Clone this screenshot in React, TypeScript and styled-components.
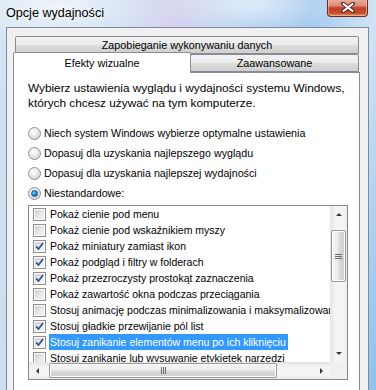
import React from 'react';
import styled, { createGlobalStyle } from 'styled-components';

const GlobalStyle = createGlobalStyle`
  html, body {
    margin: 0;
    padding: 0;
  }
  body {
    width: 376px;
    height: 390px;
    overflow: hidden;
    font-family: "Liberation Sans", Arial, sans-serif;
    font-size: 11px;
    color: #000;
  }
`;

const Frame = styled.div`
  width: 376px;
  height: 390px;
  display: flex;
  flex-direction: column;
  overflow: hidden;
  background:
    radial-gradient(ellipse 120px 40px at 60px 8px, rgba(255, 255, 255, 0.7), rgba(255, 255, 255, 0) 100%),
    radial-gradient(ellipse 90px 30px at 250px 4px, rgba(255, 255, 255, 0.6), rgba(255, 255, 255, 0) 100%),
    linear-gradient(100deg, #d3e3f2 0%, #c6daf0 25%, #d7d2f0 40%, #b2d1ef 55%, #a4c9ee 70%, #cfe3f5 85%, #8cc0ec 100%);
`;

const TitleBar = styled.div`
  height: 27px;
  display: flex;
  align-items: flex-start;
  padding-left: 6px;
`;

const Title = styled.div`
  margin-top: 6px;
  line-height: 15px;
  font-size: 12.6px;
  color: #000;
  text-shadow: 0 0 6px rgba(255, 255, 255, 0.9);
`;

const CloseButton = styled.div`
  margin-left: auto;
  margin-right: 8px;
  margin-top: -1px;
  width: 41px;
  height: 18px;
  box-sizing: border-box;
  border: 1px solid #6d2a22;
  border-top: none;
  border-radius: 0 0 4px 4px;
  display: flex;
  align-items: center;
  justify-content: center;
  background: linear-gradient(180deg, #eab3a3 0%, #dc8a76 40%, #c1402c 52%, #c44a2f 80%, #e2894e 100%);
  box-shadow: inset 0 0 0 1px rgba(255, 220, 200, 0.5);
`;

const Client = styled.div`
  flex: 1;
  margin: 0 7px 0 6px;
  border: 1px solid #7e8a98;
  border-bottom: none;
  background: #f0f0f0;
  padding: 8px 0 0 6px;
  display: flex;
  flex-direction: column;
`;

const TabControl = styled.div`
  width: 347px;
  flex: 1;
  display: flex;
  flex-direction: column;
`;

const TabRow = styled.div<{ $front?: boolean }>`
  display: flex;
  align-items: flex-end;
  height: ${p => (p.$front ? '20px' : '18px')};
  margin-top: ${p => (p.$front ? '-2px' : '0')};
  padding-left: ${p => (p.$front ? '0' : '2px')};
  position: relative;
  z-index: ${p => (p.$front ? 1 : 0)};
`;

const Tab = styled.div<{ $width: number; $active?: boolean }>`
  box-sizing: border-box;
  width: ${p => p.$width}px;
  height: ${p => (p.$active ? '21px' : '18px')};
  margin-bottom: ${p => (p.$active ? '-1px' : '0')};
  margin-left: ${p => (p.$active ? '0' : '-1px')};
  border: 1px solid #898c95;
  border-bottom: ${p => (p.$active ? 'none' : '1px solid #898c95')};
  border-radius: 2px 2px 0 0;
  display: flex;
  align-items: center;
  justify-content: center;
  padding-bottom: ${p => (p.$active ? '1px' : '0')};
  font-size: 10.8px;
  background: ${p =>
    p.$active
      ? '#ffffff'
      : 'linear-gradient(180deg, #f2f2f2 0%, #ebebeb 50%, #dddddd 51%, #cfcfcf 100%)'};
  position: relative;
  z-index: ${p => (p.$active ? 2 : 1)};
  &:first-child {
    margin-left: 0;
  }
`;

const Page = styled.div`
  flex: 1;
  background: #fff;
  border: 1px solid #898c95;
  border-bottom: none;
  padding: 8px 0 0 14px;
  display: flex;
  flex-direction: column;
`;

const Description = styled.p`
  margin: 0;
  line-height: 15px;
  font-size: 11.8px;
`;

const RadioGroup = styled.div`
  margin-top: 12px;
  display: flex;
  flex-direction: column;
`;

const RadioRow = styled.label`
  height: 20px;
  display: flex;
  align-items: center;
  gap: 3px;
  font-size: 10.7px;
`;

const RadioDot = styled.span<{ $on?: boolean }>`
  width: 13px;
  height: 13px;
  box-sizing: border-box;
  border-radius: 50%;
  border: 1px solid #8e8f8f;
  background: radial-gradient(circle at 40% 35%, #ffffff 0%, #e8e8e8 45%, #c9c9c9 100%);
  display: flex;
  align-items: center;
  justify-content: center;
  &::after {
    content: '';
    display: ${p => (p.$on ? 'block' : 'none')};
    width: 5px;
    height: 5px;
    border-radius: 50%;
    background: radial-gradient(circle at 40% 35%, #8fdcff 0%, #1a8ad8 50%, #0b3f8a 100%);
    border: 1px solid #1e4e90;
  }
`;

const ListBox = styled.div`
  margin-top: 2px;
  width: 320px;
  height: 175px;
  box-sizing: border-box;
  border: 1px solid #828790;
  display: grid;
  grid-template-columns: 1fr 17px;
  grid-template-rows: 1fr 17px;
  background: #fff;
`;

const ListContent = styled.div`
  overflow: hidden;
  display: flex;
  flex-direction: column;
`;

const ItemRow = styled.div`
  height: 16px;
  flex: none;
  display: flex;
  align-items: center;
  padding-left: 4px;
  white-space: nowrap;
  font-size: 10.5px;
`;

const Check = styled.span`
  flex: none;
  width: 13px;
  height: 13px;
  box-sizing: border-box;
  border: 1px solid #8f8f8f;
  padding: 1px;
  margin-right: 3px;
  background: #fff;
  display: flex;
`;

const CheckInner = styled.span`
  flex: 1;
  background: linear-gradient(135deg, #cfcfcf 0%, #e6e6e6 50%, #f7f7f7 100%);
  display: flex;
  align-items: center;
  justify-content: center;
`;

const ItemLabel = styled.span<{ $selected?: boolean }>`
  line-height: 16px;
  padding: 0 2px 0 1px;
  background: ${p => (p.$selected ? '#3399ff' : 'transparent')};
  color: ${p => (p.$selected ? '#fff' : '#000')};
`;

const VScroll = styled.div`
  display: flex;
  flex-direction: column;
  background: linear-gradient(90deg, #e2e2e2 0%, #f4f4f4 30%, #f4f4f4 80%, #e9e9e9 100%);
`;

const HScroll = styled.div`
  display: flex;
  align-items: center;
  background: linear-gradient(180deg, #e2e2e2 0%, #f4f4f4 30%, #f4f4f4 80%, #e9e9e9 100%);
`;

const ArrowBox = styled.div`
  width: 17px;
  height: 17px;
  flex: none;
  display: flex;
  align-items: center;
  justify-content: center;
`;

const VThumb = styled.div<{ $top: number; $len: number }>`
  margin: ${p => p.$top}px 1px 0 1px;
  height: ${p => p.$len}px;
  box-sizing: border-box;
  border: 1px solid #9a9a9a;
  border-radius: 2px;
  background: linear-gradient(90deg, #f6f6f6 0%, #ececec 45%, #dadada 55%, #cdcdcd 100%);
  box-shadow: inset 0 0 0 1px #fbfbfb;
  display: flex;
  align-items: center;
  justify-content: center;
`;

const HThumb = styled.div<{ $left: number; $len: number }>`
  margin-left: ${p => p.$left}px;
  width: ${p => p.$len}px;
  height: 15px;
  box-sizing: border-box;
  border: 1px solid #9a9a9a;
  border-radius: 2px;
  background: linear-gradient(180deg, #f6f6f6 0%, #ececec 45%, #dadada 55%, #cdcdcd 100%);
  box-shadow: inset 0 0 0 1px #fbfbfb;
  display: flex;
  align-items: center;
  justify-content: center;
`;

const Spacer = styled.div`
  flex: 1;
`;

const Corner = styled.div`
  background: #f0f0f0;
`;

type Item = { label: string; checked: boolean; selected?: boolean };

const items: Item[] = [
  { label: 'Pokaż cienie pod menu', checked: false },
  { label: 'Pokaż cienie pod wskaźnikiem myszy', checked: false },
  { label: 'Pokaż miniatury zamiast ikon', checked: true },
  { label: 'Pokaż podgląd i filtry w folderach', checked: true },
  { label: 'Pokaż przezroczysty prostokąt zaznaczenia', checked: true },
  { label: 'Pokaż zawartość okna podczas przeciągania', checked: false },
  { label: 'Stosuj animację podczas minimalizowania i maksymalizowania okien', checked: false },
  { label: 'Stosuj gładkie przewijanie pól list', checked: true },
  { label: 'Stosuj zanikanie elementów menu po ich kliknięciu', checked: true, selected: true },
  { label: 'Stosuj zanikanie lub wysuwanie etykietek narzędzi', checked: false },
  { label: 'Używaj cieni dla etykiet ikon na pulpicie', checked: true },
];

const radios = [
  'Niech system Windows wybierze optymalne ustawienia',
  'Dopasuj dla uzyskania najlepszego wyglądu',
  'Dopasuj dla uzyskania najlepszej wydajności',
  'Niestandardowe:',
];

const Tick = () => (
  <svg width="9" height="9" viewBox="0 0 9 9">
    <path d="M1 4.5 L3.5 7 L8 1" fill="none" stroke="#2c4b8c" strokeWidth="1.7" />
  </svg>
);

const Arrow = ({ dir }: { dir: 'up' | 'down' | 'left' | 'right' }) => {
  const pts = {
    up: '1,4 4,1 7,4',
    down: '1,1 4,4 7,1',
    left: '4,1 1,4 4,7',
    right: '1,1 4,4 1,7',
  }[dir];
  const vertical = dir === 'up' || dir === 'down';
  return (
    <svg width={vertical ? 8 : 5} height={vertical ? 5 : 8} viewBox={vertical ? '0 0 8 5' : '0 0 5 8'}>
      <polygon points={pts} fill="#3a3a3a" />
    </svg>
  );
};

const Grip = ({ vertical }: { vertical?: boolean }) =>
  vertical ? (
    <svg width="7" height="7" viewBox="0 0 7 7">
      <path d="M0 1.5h7M0 3.5h7M0 5.5h7" stroke="#6b6b6b" strokeWidth="1" />
    </svg>
  ) : (
    <svg width="7" height="7" viewBox="0 0 7 7">
      <path d="M1.5 0v7M3.5 0v7M5.5 0v7" stroke="#6b6b6b" strokeWidth="1" />
    </svg>
  );

export default function App() {
  return (
    <>
      <GlobalStyle />
      <Frame>
        <TitleBar>
          <Title>Opcje wydajności</Title>
          <CloseButton>
            <svg width="14" height="11" viewBox="0 0 14 11">
              <path d="M2 1.5 L12 9.5 M12 1.5 L2 9.5" stroke="#5a2a24" strokeWidth="4" strokeLinecap="round" />
              <path d="M2.5 2 L11.5 9 M11.5 2 L2.5 9" stroke="#ffffff" strokeWidth="2.2" strokeLinecap="round" />
            </svg>
          </CloseButton>
        </TitleBar>
        <Client>
          <TabControl>
            <TabRow>
              <Tab $width={344}>Zapobieganie wykonywaniu danych</Tab>
            </TabRow>
            <TabRow $front>
              <Tab $width={178} $active>
                Efekty wizualne
              </Tab>
              <Tab $width={169}>Zaawansowane</Tab>
            </TabRow>
            <Page>
              <Description>
                Wybierz ustawienia wyglądu i wydajności systemu Windows,
                <br />
                których chcesz używać na tym komputerze.
              </Description>
              <RadioGroup>
                {radios.map((r, i) => (
                  <RadioRow key={r}>
                    <RadioDot $on={i === 3} />
                    {r}
                  </RadioRow>
                ))}
              </RadioGroup>
              <ListBox>
                <ListContent>
                  {items.map(it => (
                    <ItemRow key={it.label}>
                      <Check>
                        <CheckInner>{it.checked && <Tick />}</CheckInner>
                      </Check>
                      <ItemLabel $selected={it.selected}>{it.label}</ItemLabel>
                    </ItemRow>
                  ))}
                </ListContent>
                <VScroll>
                  <ArrowBox>
                    <Arrow dir="up" />
                  </ArrowBox>
                  <VThumb $top={7} $len={52}>
                    <Grip vertical />
                  </VThumb>
                  <Spacer />
                  <ArrowBox>
                    <Arrow dir="down" />
                  </ArrowBox>
                </VScroll>
                <HScroll>
                  <ArrowBox>
                    <Arrow dir="left" />
                  </ArrowBox>
                  <HThumb $left={3} $len={228}>
                    <Grip />
                  </HThumb>
                  <Spacer />
                  <ArrowBox>
                    <Arrow dir="right" />
                  </ArrowBox>
                </HScroll>
                <Corner />
              </ListBox>
            </Page>
          </TabControl>
        </Client>
      </Frame>
    </>
  );
}
